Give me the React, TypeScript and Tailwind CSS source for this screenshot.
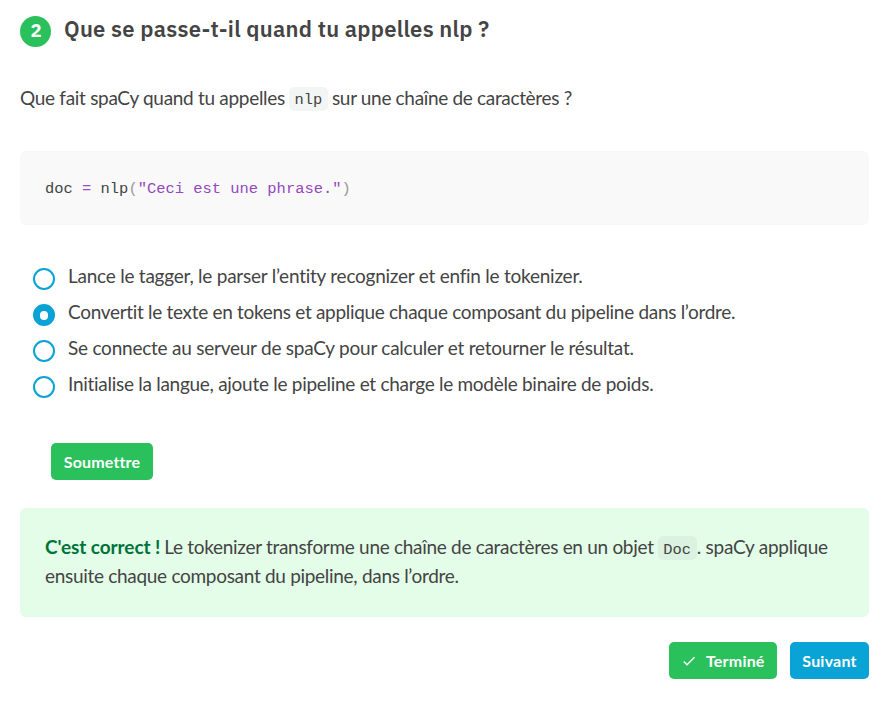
const options = [
  { text: "Lance le tagger, le parser l’entity recognizer et enfin le tokenizer.", tracking: "tracking-[-0.24px]" },
  { text: "Convertit le texte en tokens et applique chaque composant du pipeline dans l’ordre.", tracking: "tracking-[-0.31px]" },
  { text: "Se connecte au serveur de spaCy pour calculer et retourner le résultat.", tracking: "tracking-[-0.235px]" },
  { text: "Initialise la langue, ajoute le pipeline et charge le modèle binaire de poids.", tracking: "tracking-[-0.28px]" },
];

export default function App() {
  return (
    <main className="h-[701px] w-[892px] bg-white pl-5 pr-[23px] pt-[15px] font-['Lato',sans-serif] text-[19px] leading-[29px] tracking-[-0.3px] text-[#444]">
      <h2 className="flex h-8 items-center font-['IBM_Plex_Sans','Noto_Sans',sans-serif] font-bold tracking-normal">
        <span className="mr-[13px] flex size-[31px] items-center justify-center rounded-full bg-[#2ac15c] pb-px pl-px text-[18.5px] text-white">2</span>
        <span className="pb-[5px] text-[22px] font-semibold tracking-[0.26px]">Que se passe-t-il quand tu appelles nlp ?</span>
      </h2>
      <p className="mt-[35px] flex h-[30px] items-center whitespace-nowrap">
        Que fait spaCy quand tu appelles
        <code className="ml-1 mr-[4px] mt-[3px] h-6 w-[39px] rounded-[5px] bg-[#f3f5f4] text-center font-['Liberation_Mono',monospace] text-[15.4px] leading-[27px] tracking-normal">nlp</code>
        <span className="tracking-[-0.33px]">sur une chaîne de caractères ?</span>
      </p>
      <pre className="mt-[39px] flex h-[74px] items-center rounded-md bg-[#f9f9f9] px-[25px] pt-0.5 font-['Liberation_Mono',monospace] text-[15.44px] tracking-normal">
        <span>doc <span className="text-[#9f4ac9]">=</span> nlp<span className="text-[#999]">(</span><span className="text-[#9448bf]">"Ceci est une phrase."</span><span className="text-[#999]">)</span></span>
      </pre>
      <div className="mt-[34px] pl-[13px]">
        {options.map(({ text, tracking }, i) => (
          <label key={text} className="flex h-9 items-center whitespace-nowrap">
            <span className={`mr-[13px] mt-[4px] flex size-[22px] items-center justify-center rounded-full border-2 border-[#09a3d5] ${i === 1 ? "bg-[#09a3d5]" : "bg-white"}`}>
              {i === 1 && <span className="h-[9px] w-2 rounded-full bg-white" />}
            </span>
            <span className={`pb-[3px] ${tracking}`}>{text}</span>
          </label>
        ))}
      </div>
      <button className="ml-[31px] mt-10 block h-[37px] w-[102px] rounded-[5px] bg-[#2ac15c] text-base font-bold tracking-[0.15px] text-white">Soumettre</button>
      <section className="mt-7 h-[109px] rounded-md bg-[#e3fde8] px-[25px] pt-[24px] whitespace-nowrap">
        <p className="flex h-[29px] items-center">
          <b className="mr-1 tracking-[-0.08px] text-[#00733a]">C'est correct !</b>
          Le tokenizer transforme une chaîne de caractères en un objet
          <code className="ml-1 mt-[2px] h-6 w-[39px] rounded-[5px] bg-[#dbf2e0] text-center font-['Liberation_Mono',monospace] text-[15.4px] leading-[28px] tracking-normal">Doc</code>
          <span className="tracking-[-0.24px]">. spaCy applique</span>
        </p>
        <p>ensuite chaque composant du pipeline, dans l’ordre.</p>
      </section>
      <div className="mt-[25px] flex justify-end gap-[13px] text-base font-bold tracking-[0.2px] text-white">
        <button className="flex h-[37px] w-[108px] items-center rounded-[5px] bg-[#2ac15c] pl-3 pt-px">
          <svg className="mr-[9px]" width="16" height="16" viewBox="0 0 24 24" fill="white"><path d="M9 16.2 4.8 12l-1.4 1.4L9 19 21 7l-1.4-1.4L9 16.2z" /></svg>
          Terminé
        </button>
        <button className="h-[37px] w-[79px] rounded-[5px] bg-[#09a3d5]">Suivant</button>
      </div>
    </main>
  );
}
